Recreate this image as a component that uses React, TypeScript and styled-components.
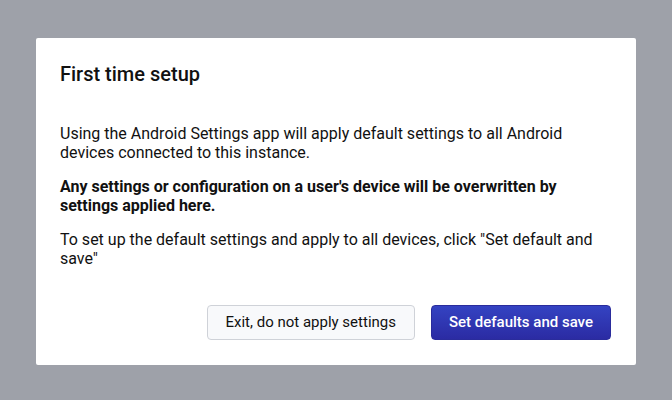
import * as React from 'react';
import styled, { createGlobalStyle } from 'styled-components';

const GlobalStyle = createGlobalStyle`
  html, body {
    margin: 0;
    padding: 0;
    height: 100%;
  }
  body {
    background: #9ea1a9;
    font-family: Roboto, "Liberation Sans", sans-serif;
    color: #111;
  }
  #root {
    height: 100%;
  }
`;

const App: React.FC = () => {
  return (
    <>
      <GlobalStyle />
      <Overlay>
        <Dialog>
          <Title>First time setup</Title>
          <Body>
            <Paragraph>
              Using the Android Settings app will apply default settings to all Android devices connected to this instance.
            </Paragraph>
            <Paragraph bold>
              Any settings or configuration on a user's device will be overwritten by settings applied here.
            </Paragraph>
            <Paragraph>
              To set up the default settings and apply to all devices, click "Set default and save"
            </Paragraph>
          </Body>
          <Footer>
            <Button>Exit, do not apply settings</Button>
            <Button primary>Set defaults and save</Button>
          </Footer>
        </Dialog>
      </Overlay>
    </>
  );
};

export default App;

const Overlay = styled.div`
  box-sizing: border-box;
  height: 100%;
  padding-top: 2px;
  display: flex;
  align-items: center;
  justify-content: center;
`;

const Dialog = styled.div`
  width: 600px;
  box-sizing: border-box;
  background: #fff;
  border-radius: 2px;
  padding: 24px 25px 25px 24px;
  display: flex;
  flex-direction: column;
`;

const Title = styled.h2`
  margin: 0;
  font-size: 20px;
  line-height: 24px;
  font-weight: 500;
  color: #111;
`;

const Body = styled.div`
  margin-top: 38px;
  display: flex;
  flex-direction: column;
  gap: 15px;
`;

const Paragraph = styled.p<{ bold?: boolean }>`
  margin: 0;
  font-size: 16px;
  line-height: 19px;
  font-weight: ${(p) => (p.bold ? 700 : 400)};
  color: #111;
`;

const Footer = styled.div`
  margin-top: 37px;
  display: flex;
  justify-content: flex-end;
  gap: 16px;
`;

const Button = styled.button<{ primary?: boolean }>`
  height: 35px;
  padding: 0 ${(p) => (p.primary ? 17 : 18)}px;
  border-radius: 4px;
  font-family: Roboto, "Liberation Sans", sans-serif;
  font-size: 15px;
  font-weight: ${(p) => (p.primary ? 500 : 400)};
  color: ${(p) => (p.primary ? '#fff' : '#111')};
  background: ${(p) => (p.primary ? 'linear-gradient(#3443c2, #2b2ba3)' : '#f8f9fb')};
  border: 1px solid ${(p) => (p.primary ? '#2a2c9c' : '#cfd2d8')};
  cursor: pointer;
`;
